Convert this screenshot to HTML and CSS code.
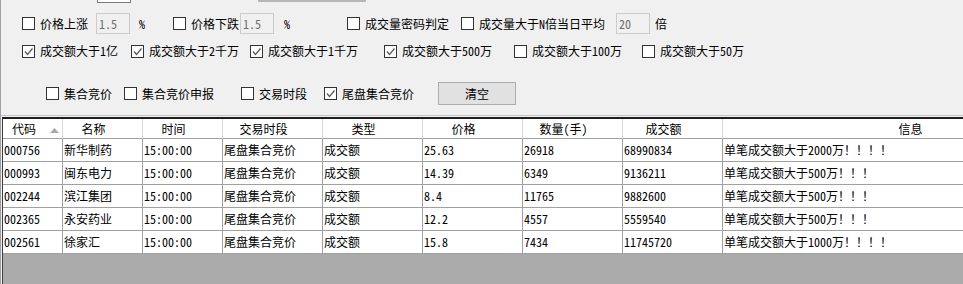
FILE: index.html
```html
<!DOCTYPE html>
<html lang="zh-CN">
<head>
<meta charset="utf-8">
<title>成交额监控</title>
<link rel="stylesheet" href="styles.css">
</head>
<body>
<div class="win">
  <div class="cutrow">
    <div class="cut-input"></div>
    <div class="cut-btn"></div>
  </div>

  <div class="row r1">
    <label class="chk w-74 first"><span class="box"></span><span class="lbl">价格上涨</span></label>
    <span class="tb">1.5</span>
    <span class="unit w-43">%</span>
    <label class="chk w-67"><span class="box"></span><span class="lbl">价格下跌</span></label>
    <span class="tb">1.5</span>
    <span class="unit w-73">%</span>
    <label class="chk w-114"><span class="box"></span><span class="lbl">成交量密码判定</span></label>
    <label class="chk w-155"><span class="box"></span><span class="lbl">成交量大于N倍当日平均</span></label>
    <span class="tb">20</span>
    <span class="unit pl-5">倍</span>
  </div>

  <div class="row r2">
    <label class="chk w-109 first"><span class="box on"><svg viewBox="0 0 11 11"><polyline points="2,5.5 4.5,8.5 9.5,2.5"/></svg></span><span class="lbl">成交额大于1亿</span></label>
    <label class="chk w-119"><span class="box on"><svg viewBox="0 0 11 11"><polyline points="2,5.5 4.5,8.5 9.5,2.5"/></svg></span><span class="lbl">成交额大于2千万</span></label>
    <label class="chk w-134"><span class="box on"><svg viewBox="0 0 11 11"><polyline points="2,5.5 4.5,8.5 9.5,2.5"/></svg></span><span class="lbl">成交额大于1千万</span></label>
    <label class="chk w-130"><span class="box on"><svg viewBox="0 0 11 11"><polyline points="2,5.5 4.5,8.5 9.5,2.5"/></svg></span><span class="lbl">成交额大于500万</span></label>
    <label class="chk w-128"><span class="box"></span><span class="lbl">成交额大于100万</span></label>
    <label class="chk"><span class="box"></span><span class="lbl">成交额大于50万</span></label>
  </div>

  <div class="row r3">
    <label class="chk w-78 first3"><span class="box"></span><span class="lbl">集合竞价</span></label>
    <label class="chk w-117"><span class="box"></span><span class="lbl">集合竞价申报</span></label>
    <label class="chk w-83"><span class="box"></span><span class="lbl">交易时段</span></label>
    <label class="chk w-114"><span class="box on"><svg viewBox="0 0 11 11"><polyline points="2,5.5 4.5,8.5 9.5,2.5"/></svg></span><span class="lbl">尾盘集合竞价</span></label>
    <button class="btn">清空</button>
  </div>

  <div class="sep"></div>

  <div class="grid">
    <div class="trow thead">
      <div class="th sort"><span class="th-label">代码</span><svg class="arrow" viewBox="0 0 9 5"><polygon points="4.5,0 9,5 0,5"/></svg></div>
      <div class="th">名称</div>
      <div class="th">时间</div>
      <div class="th">交易时段</div>
      <div class="th">类型</div>
      <div class="th">价格</div>
      <div class="th">数量(手)</div>
      <div class="th">成交额</div>
      <div class="th">信息</div>
    </div>
    <div class="trow">
      <div class="td">000756</div><div class="td">新华制药</div><div class="td">15:00:00</div><div class="td">尾盘集合竞价</div><div class="td">成交额</div><div class="td">25.63</div><div class="td">26918</div><div class="td">68990834</div><div class="td">单笔成交额大于2000万！！！！</div>
    </div>
    <div class="trow">
      <div class="td">000993</div><div class="td">闽东电力</div><div class="td">15:00:00</div><div class="td">尾盘集合竞价</div><div class="td">成交额</div><div class="td">14.39</div><div class="td">6349</div><div class="td">9136211</div><div class="td">单笔成交额大于500万！！！</div>
    </div>
    <div class="trow">
      <div class="td">002244</div><div class="td">滨江集团</div><div class="td">15:00:00</div><div class="td">尾盘集合竞价</div><div class="td">成交额</div><div class="td">8.4</div><div class="td">11765</div><div class="td">9882600</div><div class="td">单笔成交额大于500万！！！</div>
    </div>
    <div class="trow">
      <div class="td">002365</div><div class="td">永安药业</div><div class="td">15:00:00</div><div class="td">尾盘集合竞价</div><div class="td">成交额</div><div class="td">12.2</div><div class="td">4557</div><div class="td">5559540</div><div class="td">单笔成交额大于500万！！！</div>
    </div>
    <div class="trow">
      <div class="td">002561</div><div class="td">徐家汇</div><div class="td">15:00:00</div><div class="td">尾盘集合竞价</div><div class="td">成交额</div><div class="td">15.8</div><div class="td">7434</div><div class="td">11745720</div><div class="td">单笔成交额大于1000万！！！！</div>
    </div>
  </div>
</div>
</body>
</html>
```

FILE: styles.css
```css
* { box-sizing: border-box; }

html, body {
  margin: 0;
  padding: 0;
  background: #f0f0f0;
}

body {
  width: 963px;
  height: 284px;
  overflow: hidden;
  font-family: "Noto Sans Mono CJK SC", "Noto Sans CJK SC", "DejaVu Sans Mono", monospace;
  font-size: 12px;
  color: #000;
}

.win {
  width: 963px;
  height: 284px;
  border-left: 1px solid #a0a0a0;
  display: flex;
  flex-direction: column;
  overflow: hidden;
}

/* remnants of the row cut off at the top */
.cutrow {
  height: 4px;
  display: flex;
  align-items: flex-start;
  flex: none;
}
.cut-input {
  margin-left: 96px;
  width: 34px;
  height: 3px;
  background: #fff;
  border: 1px solid #7a7a7a;
  border-top: none;
}
.cut-btn {
  margin-left: 127px;
  width: 108px;
  height: 2px;
  background: #b6b6b6;
}

.row {
  display: flex;
  align-items: center;
  flex: none;
  white-space: nowrap;
}
.r1 { margin-top: 9px; height: 21px; }
.r2 { margin-top: 9px; height: 16px; }
.r3 { margin-top: 23px; height: 23px; }

.chk {
  display: flex;
  align-items: center;
  gap: 5px;
  flex: none;
  line-height: 16px;
}
.first { margin-left: 21px; }
.first3 { margin-left: 45px; }

.w-43 { width: 43px; }
.w-67 { width: 67px; }
.w-73 { width: 73px; }
.w-74 { width: 74px; }
.w-78 { width: 78px; }
.w-83 { width: 83px; }
.w-109 { width: 109px; }
.w-114 { width: 114px; }
.w-117 { width: 117px; }
.w-119 { width: 119px; }
.w-128 { width: 128px; }
.w-130 { width: 130px; }
.w-134 { width: 134px; }
.w-155 { width: 155px; }

.box {
  width: 13px;
  height: 13px;
  flex: none;
  background: #fff;
  border: 1px solid #333;
  display: flex;
}
.box svg {
  width: 11px;
  height: 11px;
}
.box polyline {
  fill: none;
  stroke: #5c5c5c;
  stroke-width: 1.3;
}

.tb {
  width: 34px;
  height: 21px;
  flex: none;
  border: 1px solid #cccccc;
  background: #f0f0f0;
  color: #6d6d6d;
  padding-left: 2px;
  line-height: 19px;
}

.unit {
  flex: none;
  padding-left: 9px;
  line-height: 16px;
}
.w-73.unit { padding-left: 10px; }
.pl-5 { padding-left: 5px; }

.btn {
  margin: 0;
  width: 78px;
  height: 23px;
  flex: none;
  background: #e1e1e1;
  border: 1px solid #adadad;
  font: inherit;
  color: #000;
  padding: 0;
  line-height: 21px;
}

.sep {
  margin-top: 10px;
  height: 1px;
  background: #c4c4c4;
  flex: none;
}

.grid {
  margin-top: 1px;
  margin-left: 1px;
  flex: 1;
  background: #ababab;
  border-top: 2px solid #1e1e1e;
  border-left: 1px solid #3c3c3c;
  overflow: hidden;
}

.trow {
  display: grid;
  grid-template-columns: 60px 80px 80px 100px 100px 100px 100px 100px 394px;
  width: 1114px;
  background: #fff;
}

.th {
  height: 20px;
  line-height: 19px;
  border-right: 1px solid #dadada;
  border-bottom: 1px solid #a0a0a0;
  text-align: center;
  padding-right: 18px;
  white-space: nowrap;
}
.th.sort {
  display: flex;
  align-items: center;
  padding-right: 0;
}
.th-label {
  width: 42px;
  text-align: center;
}
.arrow {
  width: 9px;
  height: 5px;
  margin-left: 5px;
  margin-top: 3px;
}
.arrow polygon { fill: #a9a9a9; }

.td {
  height: 23px;
  line-height: 22px;
  border-right: 1px solid #a0a0a0;
  border-bottom: 1px solid #a0a0a0;
  padding-left: 1px;
  white-space: nowrap;
  overflow: hidden;
}
```
